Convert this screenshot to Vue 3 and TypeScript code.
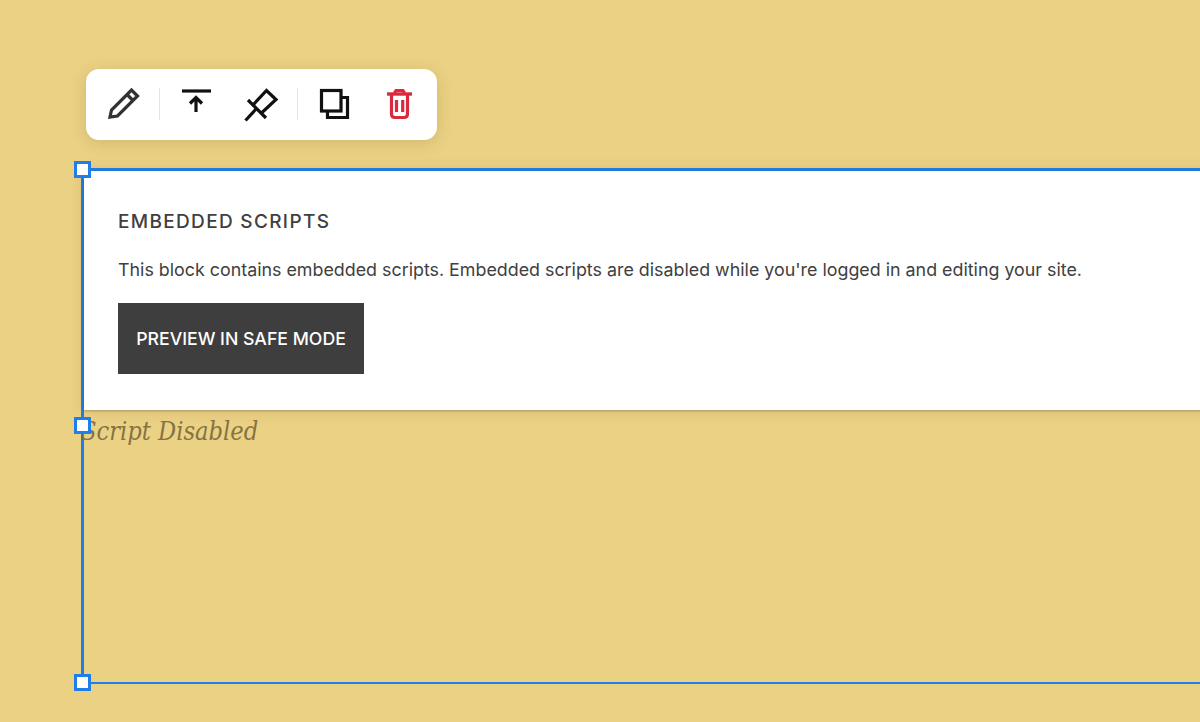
<script setup lang="ts">
const title: string = 'EMBEDDED SCRIPTS'
const body: string = "This block contains embedded scripts. Embedded scripts are disabled while you're logged in and editing your site."
</script>

<template>
  <div class="page">
    <div class="toolbar">
      <button class="tool" aria-label="Edit">
        <svg width="34" height="34" viewBox="106 88 34 34" fill="none" stroke="#333" stroke-width="3.2">
          <path d="M110 117 L111.5 110 L131.5 90 L137.5 96 L117.5 116 Z"/>
          <path d="M127 94.5 L133.5 101"/>
        </svg>
      </button>
      <span class="sep s1"></span>
      <button class="tool arrow" aria-label="Move to top">
        <svg width="34" height="34" viewBox="179 88 34 34" fill="none" stroke="#111" stroke-width="3.2">
          <path d="M182 91 H211"/>
          <path d="M196 112 V98 M190 103.5 L196 97.5 L202 103.5"/>
        </svg>
      </button>
      <button class="tool pin" aria-label="Pin">
        <svg width="36" height="34" viewBox="243 88 36 34" fill="none" stroke="#111" stroke-width="3.2">
          <path d="M248 100 L266 118"/>
          <path d="M253 105 L266.5 90.5 L276 99.5 L261.5 113"/>
          <path d="M256.5 108.5 L245.5 120.5"/>
        </svg>
      </button>
      <span class="sep s2"></span>
      <button class="tool copy" aria-label="Duplicate">
        <svg width="34" height="34" viewBox="318 88 34 34" fill="none" stroke="#111" stroke-width="3.2">
          <rect x="321.5" y="90.5" width="19.5" height="20.5"/>
          <path d="M342 97.5 H347.5 V117.5 H327.5 V112"/>
        </svg>
      </button>
      <button class="tool trash" aria-label="Delete">
        <svg width="32" height="34" viewBox="383 88 32 34" fill="none" stroke="#d9293f" stroke-width="3.2">
          <path d="M387 94 H412" stroke-width="3.4"/>
          <path d="M394.5 93 L396 90.5 H403 L404.5 93"/>
          <path d="M391.5 95 V114 Q391.5 117.5 395 117.5 H404 Q407.5 117.5 407.5 114 V95"/>
          <path d="M396.5 100 V112 M402.7 100 V112"/>
        </svg>
      </button>
    </div>

    <div class="frame">
      <div class="card">
        <h2 class="title">{{ title }}</h2>
        <p class="text">{{ body }}</p>
        <button class="cta">PREVIEW IN SAFE MODE</button>
      </div>
      <div class="note">Script Disabled</div>
      <span class="handle h-top"></span>
      <span class="handle h-mid"></span>
      <span class="handle h-bottom"></span>
    </div>
  </div>
</template>

<style scoped>
.page {
  box-sizing: border-box;
  width: 1200px;
  height: 722px;
  overflow: hidden;
  background: #ebd184;
  padding-top: 69px;
}
.toolbar {
  box-sizing: border-box;
  display: flex;
  align-items: flex-start;
  width: 351px;
  height: 71px;
  margin-left: 86px;
  padding: 19px 0 0 20px;
  background: #fff;
  border-radius: 13px;
  box-shadow: 0 3px 16px rgba(90, 70, 20, 0.18);
}
.tool {
  display: flex;
  padding: 0;
  border: 0;
  background: none;
}
.tool svg { display: block; }
.arrow { margin-left: 19px; }
.pin { margin-left: 30px; }
.copy { margin-left: 20px; }
.trash { margin-left: 31px; }
.sep {
  width: 1px;
  height: 32px;
  background: #e6e6e6;
}
.s1 { margin-left: 19px; }
.s2 { margin-left: 18px; }
.frame {
  position: relative;
  box-sizing: border-box;
  width: 1130px;
  height: 516px;
  margin: 28px 0 0 81px;
  border-style: solid;
  border-color: #1f7fea;
  border-width: 3px 0 2px 3px;
}
.card {
  box-sizing: border-box;
  height: 239px;
  padding: 40px 0 0 34px;
  background: #fff;
  box-shadow: 0 0 14px rgba(70, 55, 20, 0.16), 0 1px 2px rgba(60, 50, 20, 0.3);
  font-family: Inter, "Liberation Sans", sans-serif;
  color: #404040;
}
.title {
  margin: 0;
  font-size: 19px;
  line-height: 22px;
  font-weight: 500;
  letter-spacing: 1.33px;
}
.text {
  margin: 25px 0 0;
  font-size: 17.85px;
  line-height: 24px;
  font-weight: 400;
  white-space: nowrap;
}
.cta {
  display: block;
  width: 246px;
  height: 71px;
  margin-top: 21px;
  padding: 0;
  border: 0;
  background: #3e3e3e;
  color: #fff;
  font-family: inherit;
  font-size: 17.7px;
  font-weight: 500;
}
.note {
  margin: 5px 0 0 -3px;
  font-family: "DejaVu Serif Condensed", "DejaVu Serif", serif;
  font-stretch: condensed;
  font-style: italic;
  font-size: 25.2px;
  line-height: 34px;
  color: #857345;
}
.handle {
  position: absolute;
  box-sizing: border-box;
  width: 17px;
  height: 17px;
  left: -10px;
  background: #fff;
  border: 3px solid #1f7fea;
}
.h-top { top: -10px; }
.h-mid { top: 246px; }
.h-bottom { top: 503px; }
</style>
